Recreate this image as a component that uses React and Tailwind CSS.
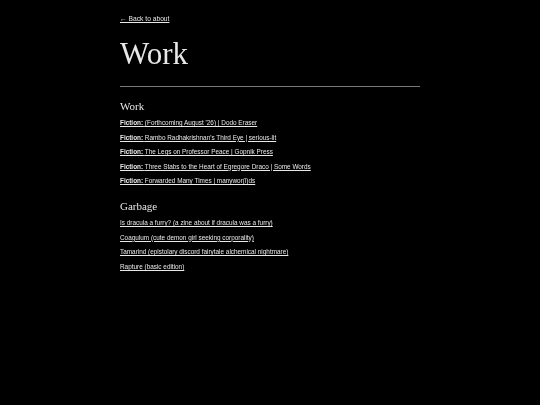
import React from "react";

const work = [
  "(Forthcoming August '26) | Dodo Eraser",
  "Rambo Radhakrishnan's Third Eye | serious-lit",
  "The Legs on Professor Peace | Gopnik Press",
  "Three Stabs to the Heart of Egregore Draco | Some Words",
  "Forwarded Many Times | manywor(l)ds",
];

const garbage = [
  "Is dracula a furry? (a zine about if dracula was a furry)",
  "Coagulum (cute demon girl seeking corporality)",
  "Tamarind (epistolary discord fairytale alchemical nightmare)",
  "Rapture (basic edition)",
];

const sans = "font-['Liberation_Sans',Arial,sans-serif]";
const serif = "font-['Liberation_Serif','Times_New_Roman',serif]";

const App = () => {
  return (
    <div className="min-h-[405px] bg-black text-[#e8e8e8]">
      <div className="w-[300px] mx-auto pt-[14px] transform-gpu antialiased">
        <a href="#" className={`${sans} block text-[6.7px] leading-[10px] underline`}>
          ← Back to about
        </a>

        <h1 className={`${serif} mt-[12px] text-[31px] leading-[36px]`}>Work</h1>

        <hr className="mt-[14px] border-0 border-t border-[#7a7a7a]" />

        <h2 className={`${serif} mt-[12px] text-[11px] leading-[14px]`}>Work</h2>
        <ul className={`${sans} mt-[5px] flex flex-col gap-[4.5px] text-[6.4px] leading-[10px]`}>
          {work.map((title) => (
            <li key={title}>
              <a href="#" className="underline">
                <span className="font-bold">Fiction:</span> {title}
              </a>
            </li>
          ))}
        </ul>

        <h2 className={`${serif} mt-[13px] text-[11px] leading-[14px]`}>Garbage</h2>
        <ul className={`${sans} mt-[5px] flex flex-col gap-[4.7px] text-[6.4px] leading-[10px]`}>
          {garbage.map((title) => (
            <li key={title}>
              <a href="#" className="underline">
                {title}
              </a>
            </li>
          ))}
        </ul>
      </div>
    </div>
  );
};

export default App;
